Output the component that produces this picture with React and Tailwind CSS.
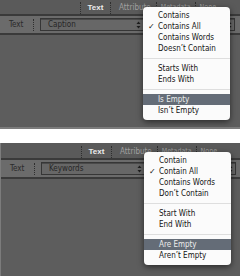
import React from "react";

const topItems = [
  ["Contains", "Contains All", "Contains Words", "Doesn’t Contain"],
  ["Starts With", "Ends With"],
  ["Is Empty", "Isn’t Empty"],
];

const bottomItems = [
  ["Contain", "Contain All", "Contains Words", "Don’t Contain"],
  ["Start With", "End With"],
  ["Are Empty", "Aren’t Empty"],
];

function Sep({ className = "" }) {
  return <div className={"border-l border-dotted border-[#2e2e2e] " + className} />;
}

function Arrows() {
  return (
    <svg width="5" height="8" viewBox="0 0 5 8" className="shrink-0">
      <path d="M2.5 0.5 L4.5 3 L0.5 3 Z" fill="#1e1e1e" />
      <path d="M2.5 7.5 L4.5 5 L0.5 5 Z" fill="#1e1e1e" />
    </svg>
  );
}

function Field({ label, className = "" }) {
  return (
    <div
      className={
        "flex h-[13px] items-center justify-between border border-[#363636] bg-[#676767] pl-[7px] pr-[2px] shadow-[inset_0_1px_0_#4a4a4a] " +
        className
      }
    >
      <span className="leading-none text-[#262626]">{label}</span>
      <Arrows />
    </div>
  );
}

function Menu({ groups, className }) {
  return (
    <div
      className={
        "absolute left-[143px] w-[87px] rounded-[4px] bg-[#fbfbfb] pt-[3px] pb-[4px] shadow-[0_2px_6px_rgba(0,0,0,0.55)] " +
        className
      }
    >
      {groups.map((group, gi) => (
        <div key={gi}>
          {gi > 0 && (
            <div className="flex h-[9px] items-center">
              <div className="h-px w-full bg-[#dedede]" />
            </div>
          )}
          {group.map((item, i) => {
            const checked = gi === 0 && i === 1;
            const active = gi === 2 && i === 0;
            return (
              <div
                key={item}
                className={
                  "flex h-[11px] items-center leading-none " +
                  (active ? "bg-[#646c77] text-[#ececec]" : "text-[#141414]")
                }
              >
                <span className="w-[15px] pl-[5px] font-['DejaVu_Sans',sans-serif] text-[8px]">
                  {checked ? "✓" : ""}
                </span>
                <span>{item}</span>
              </div>
            );
          })}
        </div>
      ))}
    </div>
  );
}

function Panel({ field, groups, menuTop, mainHeight }) {
  return (
    <div className="relative bg-[#5d5d5d]">
      <div className="flex h-[17px] items-center bg-[#5a5a5a] pt-[2px] border-b-2 border-[#3a3a3a]">
        <div className="w-[80px]" />
        <Sep className="h-[12px]" />
        <span className="w-[29px] text-center font-['Liberation_Sans',Arial,sans-serif] font-bold text-[#ececec]">
          Text
        </span>
        <Sep className="h-[12px]" />
        <span className="pl-[8px] text-[#a0a0a0]">Attribute</span>
        <Sep className="ml-[5px] h-[12px]" />
        <span className="pl-[4px] text-[7px] text-[#a0a0a0]">Metadata</span>
        <Sep className="ml-[4px] h-[12px]" />
        <span className="pl-[4px] text-[7px] text-[#a0a0a0]">None</span>
      </div>
      <div className="flex h-[19px] items-center bg-[#6b6b6b] border-b-2 border-[#3a3a3a]">
        <span className="w-[33px] pl-[9px] text-[#2a2a2a]">Text</span>
        <Sep className="h-[12px]" />
        <Field label={field} className="ml-[6px] w-[104px]" />
        <Field label="" className="ml-[3px] w-[88px]" />
      </div>
      <div className={mainHeight} />
      <Menu groups={groups} className={menuTop} />
    </div>
  );
}

export default function App() {
  return (
    <div className="h-[276px] w-[240px] overflow-hidden bg-white font-['DejaVu_Sans_Condensed','Liberation_Sans',Arial,sans-serif] text-[8px]">
      <div className="-mt-px border-b-2 border-[#7c7c7c]">
        <Panel field="Caption" groups={topItems} menuTop="top-[8px]" mainHeight="h-[92px]" />
      </div>
      <div className="h-[14px]" />
      <div className="border-l border-[#7c7c7c]">
        <Panel field="Keywords" groups={bottomItems} menuTop="top-[9px]" mainHeight="h-[100px]" />
      </div>
    </div>
  );
}
